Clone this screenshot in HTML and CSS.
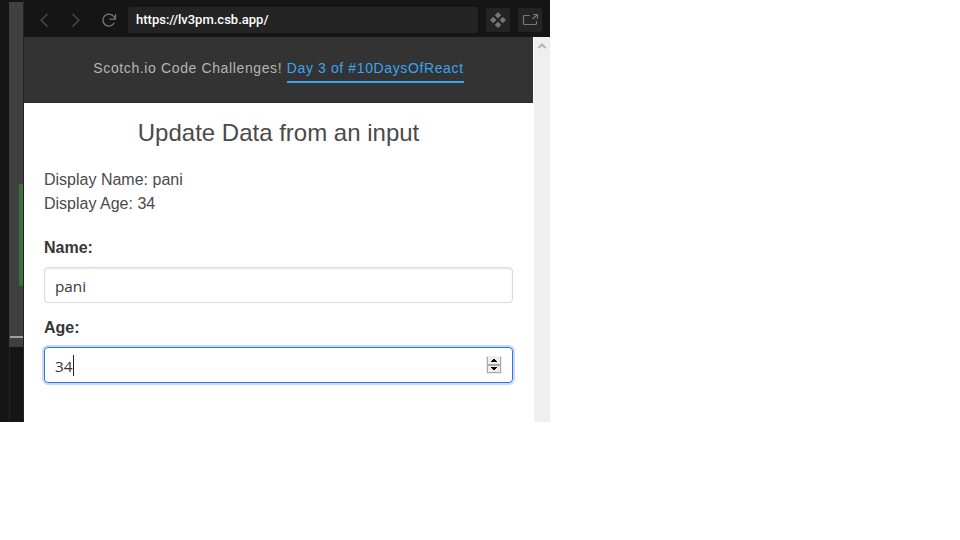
FILE: index.html
```
<!DOCTYPE html>
<html lang="en">
<head>
<meta charset="utf-8">
<title>Update Data from an input</title>
<link rel="stylesheet" href="styles.css">
</head>
<body>
<div class="window">
  <aside class="gutter">
    <div class="minimap"><div class="change"></div><div class="marker"></div></div>
    <div class="track"></div>
  </aside>
  <div class="browser">
    <div class="toolbar">
      <svg class="nav" width="16" height="16" viewBox="0 0 16 16"><path d="M11.5 2 5 8.2l6.500 6.300"/></svg>
      <svg class="nav next" width="16" height="16" viewBox="0 0 16 16"><path d="M4.500 2 11 8.200 4.500 14.500"/></svg>
      <svg class="nav reload" width="16" height="16" viewBox="0 0 16 16"><path d="M13.300 10.800A6 6 0 1 1 12.400 4.100L14.300 6.200M14.500 2V7.100H8.300"/></svg>
      <div class="address">https://lv3pm.csb.app/</div>
      <div class="tool"><svg width="16" height="16" viewBox="0 0 16 16"><g class="dots"><path d="M8 .4 10.900 3.300 8 6.200 5.100 3.300zM3.200 5.200 6.100 8.100 3.200 11 .3 8.100zM12.800 5.200 15.700 8.100 12.800 11 9.900 8.100zM8 10 10.900 12.900 8 15.800 5.100 12.900z"/></g></svg></div>
      <div class="tool"><svg class="open" width="16" height="16" viewBox="0 0 16 16"><path d="M8 3.500H2.500Q1.500 3.500 1.500 4.500V11.500Q1.500 12.500 2.500 12.500H13.500Q14.500 12.500 14.500 11.500V9M10.500 7 15.500 2.500M11 2.500H15.500V7"/></svg></div>
    </div>
    <div class="viewport">
      <div class="page">
        <header class="banner"><p>Scotch.io Code Challenges! <a>Day 3 of #10DaysOfReact</a></p></header>
        <main>
          <h1>Update Data from an input</h1>
          <p class="display">Display Name: pani<br>Display Age: 34</p>
          <div class="label">Name:</div>
          <div class="input">pani</div>
          <div class="label">Age:</div>
          <div class="input focused"><span class="value">34</span>
            <svg class="spinner" width="16" height="18" viewBox="0 0 16 18" shape-rendering="crispEdges"><path fill="#eee" d="M0 0h16v18H0z"/><path fill="#a8a8a8" d="M1 1h1v16H1zM14 1h1v16h-1zM1 8h14v2H1zM1 16h14v1H1z"/><path d="M7 3h2v1H7zM6 4h4v1H6zM5 5h6v1H5zM5 11h6v1H5zM6 12h4v1H6zM7 13h2v1H7z"/></svg>
          </div>
        </main>
      </div>
      <div class="scrollbar"><svg width="10" height="8" viewBox="0 0 10 8"><path d="M1.500 6 5 2.500 8.500 6"/></svg></div>
    </div>
  </div>
</div>
</body>
</html>
```
FILE: styles.css
```
* { box-sizing: border-box; }
body { margin: 0; background: #fff; font-family: "Liberation Sans", Arial, sans-serif; color: #4a4a4a; }
p, h1 { margin: 0; }
.window { display: flex; width: 550px; height: 422px; }
.gutter { width: 24px; padding: 2px 0 0 9px; background: #151515; border-right: 1px solid #222; }
.minimap { height: 345px; padding-top: 182px; background: #3f3f3f; }
.track { height: 75px; border-left: 1px solid #222; }
.change { width: 4px; height: 102px; margin-left: 10px; background: #3a713b; }
.marker { height: 2px; margin: 50px 0 0 1px; background: #a0a0a0; }
.browser { flex: 1; display: flex; flex-direction: column; }
.toolbar { height: 37px; display: flex; align-items: center; padding: 3px 8px 0 12px; background: #151515; }
.toolbar svg { display: block; flex: none; }
.nav { fill: none; stroke: #505050; stroke-width: 1.2; }
.next { margin-left: 16px; }
.reload { margin-left: 17px; stroke: #777; stroke-width: 1.300; }
.address { width: 350px; height: 26px; margin-left: 11px; padding-left: 8px; border-radius: 2px; background: #242424; color: #fff; font: 500 13px/25px Roboto, sans-serif; }
.tool { width: 24px; height: 24px; margin-left: 8px; padding: 4px; border-radius: 2px; background: #242424; }
.dots { fill: #777; stroke: #777; stroke-width: .6; stroke-linejoin: round; }
.open { fill: none; stroke: #777; stroke-width: 1.200; }
.viewport { flex: 1; display: flex; }
.page { width: 509px; margin-right: 1px; }
.banner { height: 66px; padding-top: 19px; background: #333; border-bottom: 1px solid #292929; color: #b5b5b5; text-align: center; font-size: 14px; line-height: 24px; letter-spacing: .62px; white-space: nowrap; }
.banner a { color: #3ca4ef; border-bottom: 2px solid #3ca4ef; padding-bottom: 5px; }
main { padding: 15px 20px 0; }
h1 { font-size: 24px; font-weight: 400; line-height: 30px; text-align: center; }
.display { margin-top: 20px; font-size: 16px; line-height: 24px; }
.label { margin-top: 20px; color: #363636; font-size: 16px; font-weight: 700; line-height: 24px; }
.input { display: flex; align-items: center; height: 36px; margin-top: 7px; padding: 2px 10px 0 10px; border: 1px solid #dbdbdb; border-radius: 4px; box-shadow: inset 0 1px 2px rgba(10,10,10,.1); color: #363636; font: 15.3px/24px "Open Sans", "Noto Sans", sans-serif; }
.input + .label { margin-top: 13px; }
.focused { justify-content: space-between; padding-top: 0; border-color: #3273dc; box-shadow: 0 0 0 2px #cbdaf3; }
.value { height: 21px; line-height: 23px; border-right: 1px solid #222; }
.scrollbar { width: 16px; padding: 5px 3px; background: #efefef; }
.scrollbar svg { display: block; fill: none; stroke: #b5b5b5; stroke-width: 2; }
```
